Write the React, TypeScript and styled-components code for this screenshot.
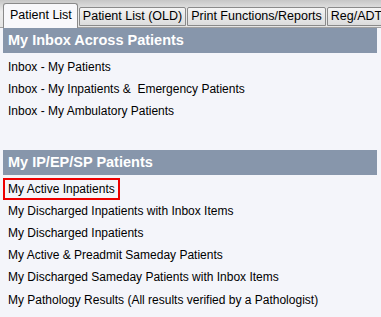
import React from 'react';
import styled, { createGlobalStyle } from 'styled-components';

const GlobalStyle = createGlobalStyle`
    html, body {
        margin: 0;
        padding: 0;
        background: #f4f5fa;
    }
    body {
        font-family: 'Liberation Sans', Arial, sans-serif;
        color: #000;
    }
`;

const tabs = ['Patient List', 'Patient List (OLD)', 'Print Functions/Reports', 'Reg/ADT'];

const inboxItems = [
    'Inbox - My Patients',
    'Inbox - My Inpatients &\u00a0 Emergency Patients',
    'Inbox - My Ambulatory Patients',
];

const ipItems = [
    'My Active Inpatients',
    'My Discharged Inpatients with Inbox Items',
    'My Discharged Inpatients',
    'My Active & Preadmit Sameday Patients',
    'My Discharged Sameday Patients with Inbox Items',
    'My Pathology Results (All results verified by a Pathologist)',
];

const App: React.FC = () => {
    return (
        <>
            <GlobalStyle />
            <Page>
                <TabBar>
                    {tabs.map((t, i) => (
                        <Tab key={t} active={i === 0}>
                            {t}
                        </Tab>
                    ))}
                </TabBar>
                <Panel>
                    <Section>
                        <SectionHeader>My Inbox Across Patients</SectionHeader>
                        <List>
                            {inboxItems.map((item) => (
                                <Item key={item}>{item}</Item>
                            ))}
                        </List>
                    </Section>
                    <Section>
                        <SectionHeader>My IP/EP/SP Patients</SectionHeader>
                        <List>
                            {ipItems.map((item, i) => (
                                <Item key={item} highlighted={i === 0}>
                                    {item}
                                </Item>
                            ))}
                        </List>
                    </Section>
                </Panel>
            </Page>
        </>
    );
};

const Page = styled.div`
    width: 381px;
    height: 317px;
    overflow: hidden;
    display: flex;
    flex-direction: column;
`;

const TabBar = styled.div`
    height: 28px;
    flex: none;
    display: flex;
    align-items: flex-end;
    padding-left: 3px;
    background: linear-gradient(#c6c6c6 0px, #d6d6d6 5px, #ececec 12px, #e4e4e4 27px, #a0a0a0 27px, #a0a0a0 28px);
    white-space: nowrap;
    overflow: hidden;
`;

const Tab = styled.div<{ active?: boolean }>`
    flex: none;
    font-size: 12.5px;
    box-sizing: border-box;
    height: ${(p) => (p.active ? '25px' : '19px')};
    margin-bottom: ${(p) => (p.active ? '0' : '2px')};
    padding: ${(p) => (p.active ? '4px 5px 0 6px' : '1px 3px 0 3px')};
    border: 1px solid #8a8a8a;
    border-bottom: ${(p) => (p.active ? 'none' : '1px solid #8a8a8a')};
    border-radius: ${(p) => (p.active ? '3px 3px 0 0' : '2px 2px 0 0')};
    background: ${(p) =>
        p.active ? '#f8f8fb' : 'linear-gradient(#f4f4f4, #dcdcdc)'};
    color: #000;
    & + & {
        margin-left: 1px;
    }
`;

const Panel = styled.div`
    flex: 1;
    padding: 0 4px 0 3px;
    background: #f4f5fa;
`;

const Section = styled.div`
    padding-bottom: 27px;
`;

const SectionHeader = styled.div`
    height: 25px;
    line-height: 25px;
    background: #8796ab;
    color: #fff;
    font-weight: bold;
    font-size: 14.5px;
    padding-left: 5px;
`;

const List = styled.div`
    display: flex;
    flex-direction: column;
    align-items: flex-start;
    padding-top: 3px;
`;

const Item = styled.div<{ highlighted?: boolean }>`
    box-sizing: border-box;
    height: 22.2px;
    line-height: 18px;
    font-size: 12px;
    padding: 0 3px;
    border: 2px solid ${(p) => (p.highlighted ? '#ee0000' : 'transparent')};
    white-space: nowrap;
`;

export default App;
